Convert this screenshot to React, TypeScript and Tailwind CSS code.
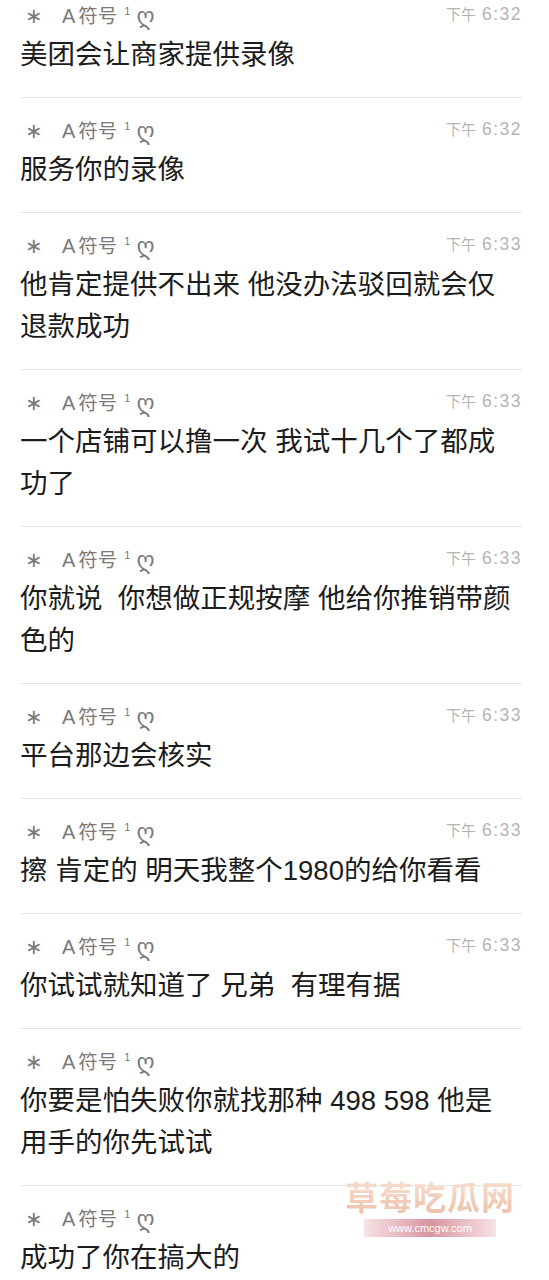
import React from "react";

type Msg = { time?: string; lines: string[] };

const msgs: Msg[] = [
  { time: "6:32", lines: ["美团会让商家提供录像"] },
  { time: "6:32", lines: ["服务你的录像"] },
  { time: "6:33", lines: ["他肯定提供不出来 他没办法驳回就会仅", "退款成功"] },
  { time: "6:33", lines: ["一个店铺可以撸一次 我试十几个了都成", "功了"] },
  { time: "6:33", lines: ["你就说  你想做正规按摩 他给你推销带颜", "色的"] },
  { time: "6:33", lines: ["平台那边会核实"] },
  { time: "6:33", lines: ["擦 肯定的 明天我整个1980的给你看看"] },
  { time: "6:33", lines: ["你试试就知道了 兄弟  有理有据"] },
  { lines: ["你要是怕失败你就找那种 498 598 他是", "用手的你先试试"] },
  { lines: ["成功了你在搞大的"] },
];

const FONT = {
  fontFamily:
    '"Liberation Sans", "Noto Sans CJK SC", "DejaVu Sans", sans-serif',
};

function Header({ time }: { time?: string }) {
  return (
    <div className="flex h-[24px] items-center justify-between">
      <div className="flex items-center leading-[24px] text-[#7a7a7a]">
        <span className="ml-[5px] w-[12px] text-center text-[21px]" style={{ fontFamily: '"DejaVu Sans", sans-serif' }}>∗</span>
        <span className="ml-[25px] text-[20px]">A</span>
        <span className="ml-[3px] text-[19.5px]">符号</span>
        <span className="ml-[7px] -translate-y-[5px] text-[11px]">1</span>
        <span className="ml-[6px] text-[23px]" style={{ fontFamily: '"DejaVu Sans", sans-serif' }}>ღ</span>
      </div>
      {time && (
        <span className="flex -translate-y-[2px] items-baseline leading-[24px] text-[#b4b4b4]">
          <span className="text-[15px]">下午</span>
          <span className="ml-[6px] text-[17.5px] tracking-[1.5px]">{time}</span>
        </span>
      )}
    </div>
  );
}

export default function App() {
  return (
    <div className="relative min-h-[1280px] w-full overflow-hidden bg-white" style={FONT}>
      <div className="pl-[20px] pr-[27px] pt-[4px]">
        {msgs.map((m, i) => (
          <div
            key={i}
            className={
              (i === 0 ? "" : "pt-[21px] ") +
              "border-b border-[#e6e6e6] pb-[21px]"
            }
          >
            <Header time={m.time} />
            <div className="mt-[6px] text-[27.5px] leading-[42px] text-[#1c1c1c]">
              {m.lines.map((l, j) => (
                <div key={j} className="whitespace-pre">{l}</div>
              ))}
            </div>
          </div>
        ))}
      </div>
      <div className="absolute left-[345px] top-[1176px] flex flex-col items-center">
        <div
          className="bg-gradient-to-b from-[#f8e2d4] to-[#ecc0a8] bg-clip-text text-[33px] font-bold leading-[40px] tracking-[1px] text-transparent"
          style={{ fontFamily: '"Noto Sans CJK SC", sans-serif' }}
        >
          草莓吃瓜网
        </div>
        <div className="mt-[3px] flex h-[18px] w-[132px] items-center justify-center bg-gradient-to-r from-[#f7e3e7] via-[#d8959f] to-[#f7e3e7] text-[11px] leading-[18px] text-white">
          www.cmcgw.com
        </div>
      </div>
    </div>
  );
}
